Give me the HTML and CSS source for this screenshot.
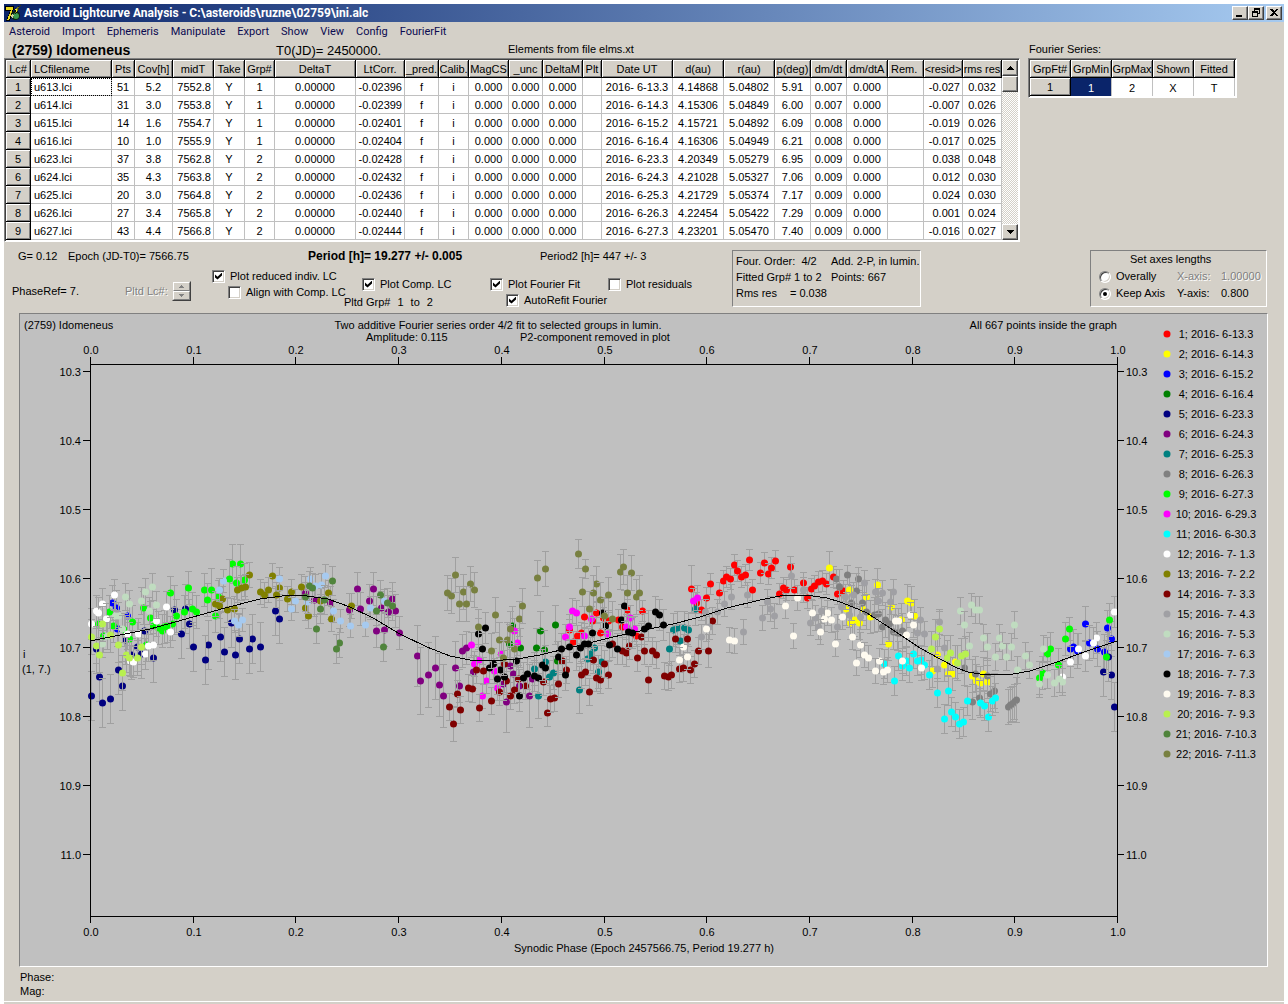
FILE: index.html
```html
<!DOCTYPE html>
<html lang="en">

<head>
  <meta charset="UTF-8" />
  <meta name="viewport" content="width=device-width, initial-scale=1.0" />
  <title>Asteroid Lightcurve Analysis</title>
  <link rel="stylesheet" href="styles.css">
</head>

<body>
  <div class="app">
    <header class="titlebar">
      <svg class="app-icon" viewBox="0 0 16 16" aria-hidden="true">
        <path d="M0 1h9v3L5 16H1L5 6H0z" fill="#000" />
        <path d="M1 2h7v2L4 15H2L6 5H1z" fill="#e8d820" />
        <circle cx="10.500" cy="10.500" r="4.500" fill="#102010" />
        <circle cx="11" cy="11" r="3" fill="#3c9a50" />
        <path d="M16 0l-4 4h2l-4 5 1-4H9z" fill="#f0f030" stroke="#000" stroke-width=".5" />
        <path d="M7 9l2 1-1 3-2-1z" fill="#d0d0a0" />
      </svg>
      <h1>Asteroid Lightcurve Analysis - C:\asteroids\ruzne\02759\ini.alc</h1>
      <div class="window-buttons">
        <button type="button" aria-label="Minimize"><svg viewBox="0 0 12 10"><path d="M2 7h6v2H2z" /></svg></button>
        <button type="button" aria-label="Restore"><svg viewBox="0 0 12 10"><path d="M4 0h6v6H8V5h1V2H5v1H4zM2 3h6v6H2zM3 5v3h4V5z" fill-rule="evenodd" /></svg></button>
        <button type="button" class="close" aria-label="Close"><svg viewBox="0 0 12 10"><path d="M2 1h2l2 2 2-2h2L7 4.500l3 3.500H8L6 6 4 8H2l3-3.500z" /></svg></button>
      </div>
    </header>

    <nav class="menu">
      <a href="#">Asteroid</a>
      <a href="#">Import</a>
      <a href="#">Ephemeris</a>
      <a href="#">Manipulate</a>
      <a href="#">Export</a>
      <a href="#">Show</a>
      <a href="#">View</a>
      <a href="#">Config</a>
      <a href="#">FourierFit</a>
    </nav>

    <div class="heading">
      <h2>(2759) Idomeneus</h2>
      <span class="t0">T0(JD)= 2450000.</span>
      <span>Elements from file elms.xt</span>
      <span>Fourier Series:</span>
    </div>

    <div class="grids">
      <div class="grid-box">
        <table class="grid" id="lcGrid"></table>
        <div class="scrollbar">
          <button type="button" aria-label="Scroll up"><svg viewBox="0 0 7 4"><path d="M3 0h1l3 4H0z" /></svg></button>
          <div class="thumb"></div>
          <div class="track"></div>
          <button type="button" aria-label="Scroll down"><svg viewBox="0 0 7 4"><path d="M0 0h7L4 4H3z" /></svg></button>
        </div>
      </div>
      <div class="grid-box">
        <table class="grid fourier">
          <tr><th>GrpFt#</th><th>GrpMin</th><th>GrpMax</th><th>Shown</th><th>Fitted</th></tr>
          <tr><th class="fixed">1</th><td class="selected">1</td><td>2</td><td>X</td><td>T</td></tr>
        </table>
      </div>
    </div>

    <form class="controls">
      <div class="options">
        <div class="summary">
          <span class="g">G= 0.12</span>
          <span>Epoch (JD-T0)= 7566.75</span>
          <strong>Period [h]= 19.277 +/- 0.005</strong>
          <span>Period2 [h]= 447 +/- 3</span>
        </div>
        <div class="groups">
          <div class="group phase-ref">
            <span>PhaseRef= 7.</span>
            <span class="disabled">Pltd Lc#:</span>
            <div class="spin">
              <button type="button" disabled aria-label="Up"><svg viewBox="0 0 5 3"><path d="M2 0h1l2 3H0z" /></svg></button>
              <button type="button" disabled aria-label="Down"><svg viewBox="0 0 5 3"><path d="M0 0h5L3 3H2z" /></svg></button>
            </div>
          </div>
          <div class="group reduced">
            <label><input type="checkbox" checked>Plot reduced indiv. LC</label>
            <label class="indent"><input type="checkbox">Align with Comp. LC</label>
          </div>
          <div class="group comp">
            <label><input type="checkbox" checked>Plot Comp. LC</label>
            <div class="pltd-grp"><span>Pltd Grp#</span><span>1</span><span>to</span><span>2</span></div>
          </div>
          <div class="group fit">
            <label><input type="checkbox" checked>Plot Fourier Fit</label>
            <label class="indent"><input type="checkbox" checked>AutoRefit Fourier</label>
          </div>
          <div class="group">
            <label><input type="checkbox">Plot residuals</label>
          </div>
        </div>
      </div>

      <div class="info">
        <span>Four. Order:&nbsp; 4/2</span><span>Add. 2-P, in lumin.</span>
        <span>Fitted Grp# 1 to 2</span><span>Points: 667</span>
        <span class="rms"><span>Rms res</span><span>= 0.038</span></span>
      </div>

      <fieldset class="axes">
        <legend>Set axes lengths</legend>
        <label><input type="radio" name="axes">Overally</label>
        <span class="disabled">X-axis:</span><span class="disabled">1.00000</span>
        <label><input type="radio" name="axes" checked>Keep Axis</label>
        <span>Y-axis:</span><span>0.800</span>
      </fieldset>
    </form>

    <main class="plot">
      <svg id="chart" viewBox="20 314 1130 652" role="img" aria-label="Lightcurve">
        <text x="24" y="329">(2759) Idomeneus</text>
        <text x="498" y="329" class="mid">Two additive Fourier series order 4/2 fit to selected groups in lumin.</text>
        <text x="1117" y="329" class="end">All 667 points inside the graph</text>
        <text x="366" y="341">Amplitude: 0.115</text>
        <text x="520" y="341">P2-component removed in plot</text>
        <text x="23" y="658">i</text>
        <text x="22" y="673">(1, 7.)</text>
        <text x="644" y="952" class="mid">Synodic Phase (Epoch 2457566.75, Period 19.277 h)</text>
        <g id="points"></g>
        <polyline class="fit-curve" points="90,641 120,635 150,629 193,617 225,608 260,599 275,597 290,595 307,596 328,599 350,607 373,618 400,634 427,647 450,656 470,660 490,661 517,659 540,655 573,647 613,637 640,631 673,624 700,617 727,608 760,600 780,596 797,595 813,596 827,598 840,602 853,607 867,613 893,630 920,648 940,659 957,668 968,672 980,674 993,675 1013,674 1030,671 1057,662 1087,651 1117,641" />
        <g id="axis"></g>
      </svg>
      <ul class="legend" id="legend"></ul>
    </main>

    <footer class="status">
      <div>Phase:</div>
      <div>Mag:</div>
    </footer>
  </div>

  <script src="script.js"></script>
</body>

</html>
```
FILE: styles.css
```css
* {
  box-sizing: border-box;
}

body {
  margin: 0;
  padding: 4px 4px 0;
  background: #fff;
  color: #000;
  font: 11px/13px "Liberation Sans", Arial, sans-serif;
}

.app {
  display: flex;
  flex-direction: column;
  min-height: calc(100vh - 4px);
  background: #d4d0c8;
}

/* title bar */
.titlebar {
  display: flex;
  align-items: center;
  gap: 3px;
  height: 18px;
  padding: 0 2px 0 1px;
  background: linear-gradient(to right, #0a246a, #a6caf0);
}

.app-icon {
  width: 16px;
  height: 16px;
}

.titlebar h1 {
  flex: 1;
  margin: 0;
  color: #fff;
  font: bold 12px/18px Roboto, Tahoma, sans-serif;
  white-space: nowrap;
}

.window-buttons {
  display: flex;
}

button {
  display: flex;
  align-items: center;
  justify-content: center;
  padding: 0;
  background: #d4d0c8;
  border: 1px solid;
  border-color: #fff #404040 #404040 #fff;
  box-shadow: inset -1px -1px #808080;
}

.window-buttons button {
  width: 16px;
  height: 14px;
}

.window-buttons .close {
  margin-left: 2px;
}

.window-buttons svg {
  width: 12px;
  height: 10px;
}

svg {
  shape-rendering: crispEdges;
}

circle {
  shape-rendering: geometricPrecision;
}

/* menu */
.menu {
  display: flex;
  gap: 12px;
  height: 19px;
  padding: 0 5px;
}

.menu a {
  color: #0a0a50;
  font: 11px/19px Roboto, Tahoma, sans-serif;
  text-decoration: none;
}

.heading {
  display: grid;
  grid-template-columns: 264px 232px 521px auto;
  height: 17px;
  padding-left: 8px;
  line-height: 17px;
  white-space: nowrap;
}

.heading h2 {
  margin: 0;
  font-size: 14px;
  line-height: 19px;
}

.heading .t0 {
  font-size: 13px;
  line-height: 19px;
}

/* grids */
.grids {
  display: flex;
  align-items: flex-start;
  gap: 8px;
}

.grid-box {
  display: flex;
  background: #fff;
  border: 1px solid;
  border-color: #808080 #fff #fff #808080;
  box-shadow: inset 1px 1px #404040;
  padding: 1px;
}

.grid {
  table-layout: fixed;
  border-collapse: separate;
  border-spacing: 0;
  width: 996px;
}

.grid.fourier {
  width: 205px;
}

.grid th,
.grid td {
  height: 18px;
  padding: 2px 2px 0;
  border-right: 1px solid #c0c0c0;
  border-bottom: 1px solid #c0c0c0;
  font-weight: normal;
  line-height: 15px;
  text-align: center;
  white-space: nowrap;
  overflow: hidden;
}

.grid th {
  padding: 2px 0 0;
  background: #d4d0c8;
  border-color: #000;
  box-shadow: inset 1px 1px #fff, inset -1px -1px #808080;
}

.grid .left {
  padding-left: 3px;
  text-align: left;
}

.grid .right {
  text-align: right;
}

.grid .focus {
  outline: 1px dotted #000;
  outline-offset: -1px;
}

.grid.fourier td {
  border-bottom: 0;
}

.grid .selected {
  background: #0a246a;
  color: #fff;
}

.scrollbar {
  display: flex;
  flex-direction: column;
  width: 16px;
}

.scrollbar button {
  height: 16px;
}

.scrollbar svg {
  width: 7px;
  height: 4px;
}

.scrollbar .thumb {
  height: 16px;
  background: #d4d0c8;
  border: 1px solid;
  border-color: #fff #404040 #404040 #fff;
  box-shadow: inset -1px -1px #808080;
}

.scrollbar .track {
  flex: 1;
  background: repeating-conic-gradient(#d4d0c8 0 25%, #fff 0 50%) 0 0 / 2px 2px;
}

/* controls */
.controls {
  display: flex;
  align-items: flex-start;
  padding: 8px 17px 0 8px;
  height: 71px;
  white-space: nowrap;
}

.options {
  flex: none;
  width: 720px;
}

.summary {
  display: grid;
  grid-template-columns: 50px 240px 232px auto;
  padding-left: 6px;
}

.summary strong {
  font-size: 12px;
}

.groups {
  display: flex;
  align-items: flex-start;
  padding-top: 4px;
}

.group {
  padding-top: 9px;
}

.group label,
.axes label {
  display: flex;
  align-items: center;
  gap: 5px;
  height: 16px;
}

.group .indent {
  margin-left: 16px;
}

.group.reduced {
  width: 132px;
  padding-top: 1px;
}

.phase-ref {
  display: flex;
  align-items: center;
  width: 200px;
  gap: 46px;
  padding-top: 14px;
}

.phase-ref .spin {
  margin-left: -42px;
}

.spin {
  border: 1px solid;
  border-color: #d4d0c8 #404040 #404040 #d4d0c8;
}

.spin button {
  width: 17px;
  height: 9px;
  border-color: #fff #808080 #808080 #fff;
  box-shadow: none;
}

.spin svg {
  width: 5px;
  height: 3px;
  fill: #808080;
}

.comp {
  width: 146px;
}

.comp label {
  margin-left: 18px;
}

.pltd-grp {
  display: flex;
  gap: 7px;
  line-height: 20px;
}

.fit {
  width: 118px;
}

.disabled {
  color: #808080;
  text-shadow: 1px 1px #fff;
}

input {
  appearance: none;
  display: flex;
  align-items: center;
  justify-content: center;
  flex: none;
  width: 13px;
  height: 13px;
  margin: 0;
  background: #fff;
  border: 1px solid;
  border-color: #808080 #fff #fff #808080;
  box-shadow: inset 1px 1px #404040, inset -1px -1px #d4d0c8;
}

input[type="checkbox"]:checked::after {
  content: "";
  width: 7px;
  height: 7px;
  background: #000;
  clip-path: polygon(0 28%, 36% 62%, 100% 0, 100% 42%, 36% 100%, 0 70%);
}

input[type="radio"] {
  width: 12px;
  height: 12px;
  border-radius: 50%;
}

input[type="radio"]:checked::after {
  content: "";
  width: 4px;
  height: 4px;
  border-radius: 50%;
  background: #000;
}

.info,
.axes {
  height: 57px;
  margin: 0;
  border: 1px solid;
  border-color: #808080 #fff #fff #808080;
}

.info {
  display: grid;
  grid-template-columns: 95px auto;
  grid-auto-rows: 16px;
  width: 189px;
  padding: 2px 0 0 3px;
  line-height: 16px;
}

.info .rms {
  display: flex;
  gap: 13px;
}

.axes {
  display: grid;
  grid-template-columns: 78px 44px auto;
  grid-auto-rows: 17px;
  align-items: center;
  width: 177px;
  margin-left: auto;
  padding: 0 0 0 8px;
}

.axes legend {
  float: left;
  grid-column: 1 / -1;
  margin-left: 31px;
  padding: 0;
  line-height: 15px;
}

/* plot */
.plot {
  display: flex;
  align-items: flex-start;
  margin: 0 16px 0 15px;
  background: #c0c0c0;
  border: 1px solid;
  border-color: #808080 #fff #fff #808080;
}

#chart {
  flex: 1;
  min-width: 0;
}

#chart text {
  font-size: 11px;
}

.mid {
  text-anchor: middle;
}

.end {
  text-anchor: end;
}

.axis-line {
  fill: none;
  stroke: #000;
}

.fit-curve {
  fill: none;
  stroke: #000;
}

.error-bar {
  fill: none;
  stroke: #a0a0a0;
}

.legend {
  width: 117px;
  margin: 0;
  padding: 10px 0 0 13px;
  list-style: none;
}

.legend li {
  display: flex;
  align-items: center;
  height: 20px;
}

.legend svg {
  width: 8px;
  height: 8px;
}

.legend span {
  width: 90px;
  text-align: center;
  white-space: nowrap;
}

.status {
  flex: 1;
  padding: 3px 16px 0;
  line-height: 14px;
  border-bottom: 2px solid #d4d0c8;
  box-shadow: inset 0 -1px #fff;
}
```
FILE: script.js
```js
// ---- observation grid ----
const columns = [
  ['Lc#', 25], ['LCfilename', 81, 'left'], ['Pts', 23], ['Cov[h]', 38], ['midT', 41, '', 'right'],
  ['Take', 31], ['Grp#', 30], ['DeltaT', 81], ['LtCorr.', 49, '', 'right'], ['_pred.', 34],
  ['Calib.', 30], ['MagCS', 40], ['_unc', 34], ['DeltaM', 40], ['Plt', 19], ['Date UT', 71],
  ['d(au)', 51], ['r(au)', 51], ['p(deg)', 36], ['dm/dt', 36], ['dm/dtA', 41], ['Rem.', 36, 'left'],
  ['<resid>', 39, '', 'right'], ['rms res', 39]
];

// file, pts, cov, midT, group, ltcorr, date, d, r, p, dm/dt, resid, rms
const rows = [
  ['u613.lci', 51, '5.2', '7552.8', 1, '-0.02396', '6-13.3', '4.14868', '5.04802', '5.91', '0.007', '-0.027', '0.032'],
  ['u614.lci', 31, '3.0', '7553.8', 1, '-0.02399', '6-14.3', '4.15306', '5.04849', '6.00', '0.007', '-0.007', '0.026'],
  ['u615.lci', 14, '1.6', '7554.7', 1, '-0.02401', '6-15.2', '4.15721', '5.04892', '6.09', '0.008', '-0.019', '0.026'],
  ['u616.lci', 10, '1.0', '7555.9', 1, '-0.02404', '6-16.4', '4.16306', '5.04949', '6.21', '0.008', '-0.017', '0.025'],
  ['u623.lci', 37, '3.8', '7562.8', 2, '-0.02428', '6-23.3', '4.20349', '5.05279', '6.95', '0.009', '0.038', '0.048'],
  ['u624.lci', 35, '4.3', '7563.8', 2, '-0.02432', '6-24.3', '4.21028', '5.05327', '7.06', '0.009', '0.012', '0.030'],
  ['u625.lci', 20, '3.0', '7564.8', 2, '-0.02436', '6-25.3', '4.21729', '5.05374', '7.17', '0.009', '0.024', '0.030'],
  ['u626.lci', 27, '3.4', '7565.8', 2, '-0.02440', '6-26.3', '4.22454', '5.05422', '7.29', '0.009', '0.001', '0.024'],
  ['u627.lci', 43, '4.4', '7566.8', 2, '-0.02444', '6-27.3', '4.23201', '5.05470', '7.40', '0.009', '-0.016', '0.027']
];

const grid = document.getElementById('lcGrid');
let html = '<colgroup>' + columns.map(c => `<col style="width:${c[1]}px">`).join('') + '</colgroup><tr>';
html += columns.map(c => `<th class="${c[2] || ''}">${c[0].replace('<', '&lt;')}</th>`).join('') + '</tr>';
rows.forEach((r, i) => {
  const cells = [r[0], r[1], r[2], r[3], 'Y', r[4], '0.00000', r[5], 'f', 'i', '0.000', '0.000', '0.000', '',
    '2016- ' + r[6], r[7], r[8], r[9], r[10], '0.000', '', r[11], r[12]];
  html += `<tr><th>${i + 1}</th>` + cells.map((v, j) => {
    const c = columns[j + 1];
    const focus = i === 0 && j === 0 ? ' focus' : '';
    return `<td class="${c[3] || c[2] || ''}${focus}">${v}</td>`;
  }).join('') + '</tr>';
});
grid.innerHTML = html;

// ---- axes ----
let axis = '<path class="axis-line" d="M90.5 357V923M1117.5 357V923M90 364.5H1118M90 916.5H1118"/>';
for (let i = 0; i <= 10; i++) {
  const x = 90 + Math.round(i * 102.7);
  const label = (i / 10).toFixed(1);
  axis += `<path class="axis-line" d="M${x + 0.5} 357v7M${x + 0.5} 917v6"/>`;
  axis += `<text class="mid" x="${x + 1}" y="354">${label}</text><text class="mid" x="${x + 1}" y="936">${label}</text>`;
}
for (let i = 0; i < 8; i++) {
  const y = 371 + i * 69;
  const label = (10.3 + i / 10).toFixed(1);
  axis += `<path class="axis-line" d="M83 ${y + 0.5}h7M1118 ${y + 0.5}h6"/>`;
  axis += `<text class="end" x="81" y="${y + 5}">${label}</text><text x="1126" y="${y + 5}">${label}</text>`;
}
document.getElementById('axis').innerHTML = axis;

// ---- series: date, colour, error bar half length, points as x,y[,error] ----
const series = [
  ['6-13.3', '#ff0000', 11, '596,613 584,617 592,621 569,630 573,642 577,636 581,633 600,633 608,621 618,620 627,610 622,627 642,611 636,636 603,618 691,589,24 710,584 706,598 719,593 723,581 726,577 730,579 734,565 737,571 741,577 745,575 749,560 752,590 760,573 764,563 768,574 771,568 775,561 790,567 783,588 786,590 794,590 779,594 803,583 807,598 811,589 814,586 818,582 822,581 826,584 833,577 837,594 843,591 701,610 696,603'],
  ['6-14.3', '#ffff00', 17, '829,568 849,590 866,597 877,585 907,601 911,603 891,607 862,609 846,609 850,623 854,620 859,623 870,617 888,644 901,620 914,616 932,671 937,655 944,665 948,674 952,674 955,662 972,676 976,681 980,683 983,674 987,682'],
  ['6-15.2', '#0000ff', 18, '112,603 116,608 127,616 117,629 1085,624 1107,628 1111,639 1089,643 1073,647 1070,649 1077,651 1097,649 1104,652'],
  ['6-16.4', '#008000', 20, '540,631 555,625 512,626 509,644 520,648 536,648 544,650 557,661'],
  ['6-23.3', '#000080', 25, '174,610 185,609 189,624 181,634 231,623 193,647 208,645 220,637 239,639 252,639 224,652 235,655 249,649 205,660 153,658 118,670 122,686 99,677 91,696 102,703 110,699 144,631 137,647 141,654 125,640 96,649 131,655 275,611 279,619 260,647 1103,672 1111,675 1114,707 1108,657'],
  ['6-24.3', '#800080', 17, '305,593 314,600 330,603 349,610 357,589 373,589 369,601 360,609 381,608 392,599 388,612 395,611 376,631 384,630 399,633 417,656,31 420,681,34 428,675,33 435,668,32 439,685,32 443,696,32 455,668,27 459,686 462,651 466,648 473,672 510,666 513,674 506,702,31 529,696,32 519,686 532,679 503,684'],
  ['6-25.3', '#008080', 17, '594,648 590,654 587,659 601,662 598,672 579,690,24 553,673 549,677 545,662 534,669 538,696,23 673,630 677,628 684,628 688,630 680,641 669,649 695,609'],
  ['6-26.3', '#808080', 18, '836,579,10 839,587 847,575,10 858,579,12 856,591 851,603 862,603 866,612 874,615 878,614 882,627 885,620 889,624 893,632 897,633 902,631 964,668 975,674 987,676 972,702 979,698 990,694 994,691 1008,707 1010,705 1012,704 1014,702 1016,700,23'],
  ['6-27.3', '#00ff00', 17, '232,564,20 240,564,20 229,579,20 236,583 244,580 188,588 204,590 211,590,22 170,593 207,600 218,597 143,608 192,609 196,612 184,612 176,616 150,618 132,622 109,612 113,626 103,636 129,639 124,630 153,626 162,631 164,627 172,624 215,616 146,645 158,628 167,626 98,624 1109,620 1069,629,12 1065,639 1050,649 1047,654 1058,665 1042,673 1039,678 1106,657'],
  ['6-29.3', '#ff00ff', 13, '471,645 479,660 474,664 482,696 486,681 494,671 497,688 501,654 517,643 514,631 572,611 576,613 565,637 569,627 584,636 591,619 607,634 630,618 626,627 634,629 693,601 697,598'],
  ['6-30.3', '#00ffff', 15, '898,656 913,654 917,661 906,661 902,666 909,668 894,681 884,664 921,660 924,665 929,675 937,693 948,691 951,712 955,717 944,719 959,724 963,722 967,701 980,703 984,706 988,717 992,701 995,698'],
  ['7- 1.3', '#ffffff', 16, '91,624 96,611 98,613 102,604 114,595 106,619 127,634 138,634 156,621 166,607 170,632 145,654 148,646 153,645 130,661 133,662 1114,612 1096,638 1093,643 1078,649 1085,656 1070,662 1062,677'],
  ['7- 2.2', '#808000', 13, '249,575 237,590 241,588 245,587 222,599 215,604 219,606 227,610 234,609 272,576 260,592 264,595 268,590 279,588 276,595 287,599 291,592 301,587 328,593 320,601 351,606 305,608 308,616 331,619'],
  ['7- 3.3', '#800000', 14, '453,724,18 449,707 457,694 460,710 468,688 472,689 476,670 483,671 479,708 491,701 499,692 510,696 514,690 506,681 504,664 518,679 525,686 543,682 547,713 550,699 554,698 558,684 566,670 562,661 581,675 585,672 589,692 596,678 600,680 608,675 593,660 604,664 612,644 622,651 626,653 629,646 637,658 641,637 644,651 652,651 656,655 648,680 664,676 668,677 671,675 675,639 687,639 679,669 683,668 690,670 694,664 698,651 708,651,17 712,621'],
  ['7- 4.3', '#a0a0a4', 13, '791,576 803,590 747,595 731,597 724,604 717,612 705,612 709,627 701,637 743,632 767,602 770,609 774,616 762,618 821,611 815,618 810,623 818,627 837,627 841,607 849,615 864,583 875,592 882,593 893,592 878,601 890,602 853,595 845,597 860,617 917,633 920,620 939,622 924,634 944,648 937,669'],
  ['7- 5.3', '#c0dcc0', 14, '125,597 129,604 141,601 145,592 152,587 156,605 149,611 115,616 118,616 102,644 122,629 107,636 960,611 971,605,12 975,610 979,610 964,625 1014,625 983,638 999,638 969,646 987,647 1002,646 1011,647 995,657 1006,657 1025,656 1029,665 1017,670 1043,649 1047,675 1039,684 1054,683 1062,682 1059,679'],
  ['7- 6.3', '#a6caf0', 12, '223,581 219,590 234,621 238,625 242,620 279,579 295,601 291,609 310,579 315,586 321,585 325,576 307,602 333,611 340,621 350,626 365,625 370,608 384,601'],
  ['7- 7.3', '#000000', 16, '485,628 478,634 482,649 489,668 493,664 500,670 497,679 504,677 516,661 519,696 523,678 527,674 534,676 538,678 542,665 545,668 558,657 565,675 561,649 569,647 576,655 580,648 584,644 588,644 592,633 605,626 609,645 617,649 621,620 624,606 628,632 632,633 644,629 648,626 655,612 659,615 663,625 602,613'],
  ['7- 8.3', '#fffbf0', 13, '683,647 687,657 679,660 706,629 729,640 734,641 785,606 797,598 793,636 812,613 827,613 824,619 831,620 820,632 835,644 842,617 852,637 860,645 864,655 868,658 856,663 879,661 875,671 883,672 887,670 895,621 898,621 910,615 913,625 906,635 902,661 921,668'],
  ['7- 9.3', '#b8f050', 18, '91,637 96,646 102,624 110,635 99,655 118,645 126,655 129,658 137,658 141,647 122,673 939,629 935,637 931,649 947,658 950,653 961,656 965,654 957,663'],
  ['7-10.3', '#50843c', 15, '309,586 312,588 332,581 305,597 324,600 320,609 316,629 339,643 336,649 380,595 387,603 392,606 376,611 383,647'],
  ['7-11.3', '#788040', 18, '447,593 451,596 455,575 463,592 470,584 474,590 459,604 466,604 495,615 478,627 491,651 499,640 507,640 503,658 514,649 510,629 519,619 522,606 537,578 545,569 578,554,15 585,569,10 582,592,15 596,584 593,593 600,600 608,595 589,609 604,616 612,619 620,572 623,567 631,573 627,593 636,597 639,593']
];

let points = '';
let legend = '';
series.forEach(([date, color, defErr, data], i) => {
  data.split(' ').forEach(p => {
    const [px, y, e] = p.split(',').map(Number);
    const x = px + 0.5;
    const err = (e || defErr) - 0.5;
    points += `<path class="error-bar" d="M${x} ${y - err}V${y + err}M${x - 3.5} ${y - err}h7M${x - 3.5} ${y + err}h7"/>`;
    points += `<circle cx="${x}" cy="${y}" r="3.5" fill="${color}"/>`;
  });
  legend += `<li><svg viewBox="0 0 8 8"><circle cx="4" cy="4" r="3.5" fill="${color}"/></svg><span>${i + 1}; 2016- ${date}</span></li>`;
});
document.getElementById('points').innerHTML = points;
document.getElementById('legend').innerHTML = legend;
```
